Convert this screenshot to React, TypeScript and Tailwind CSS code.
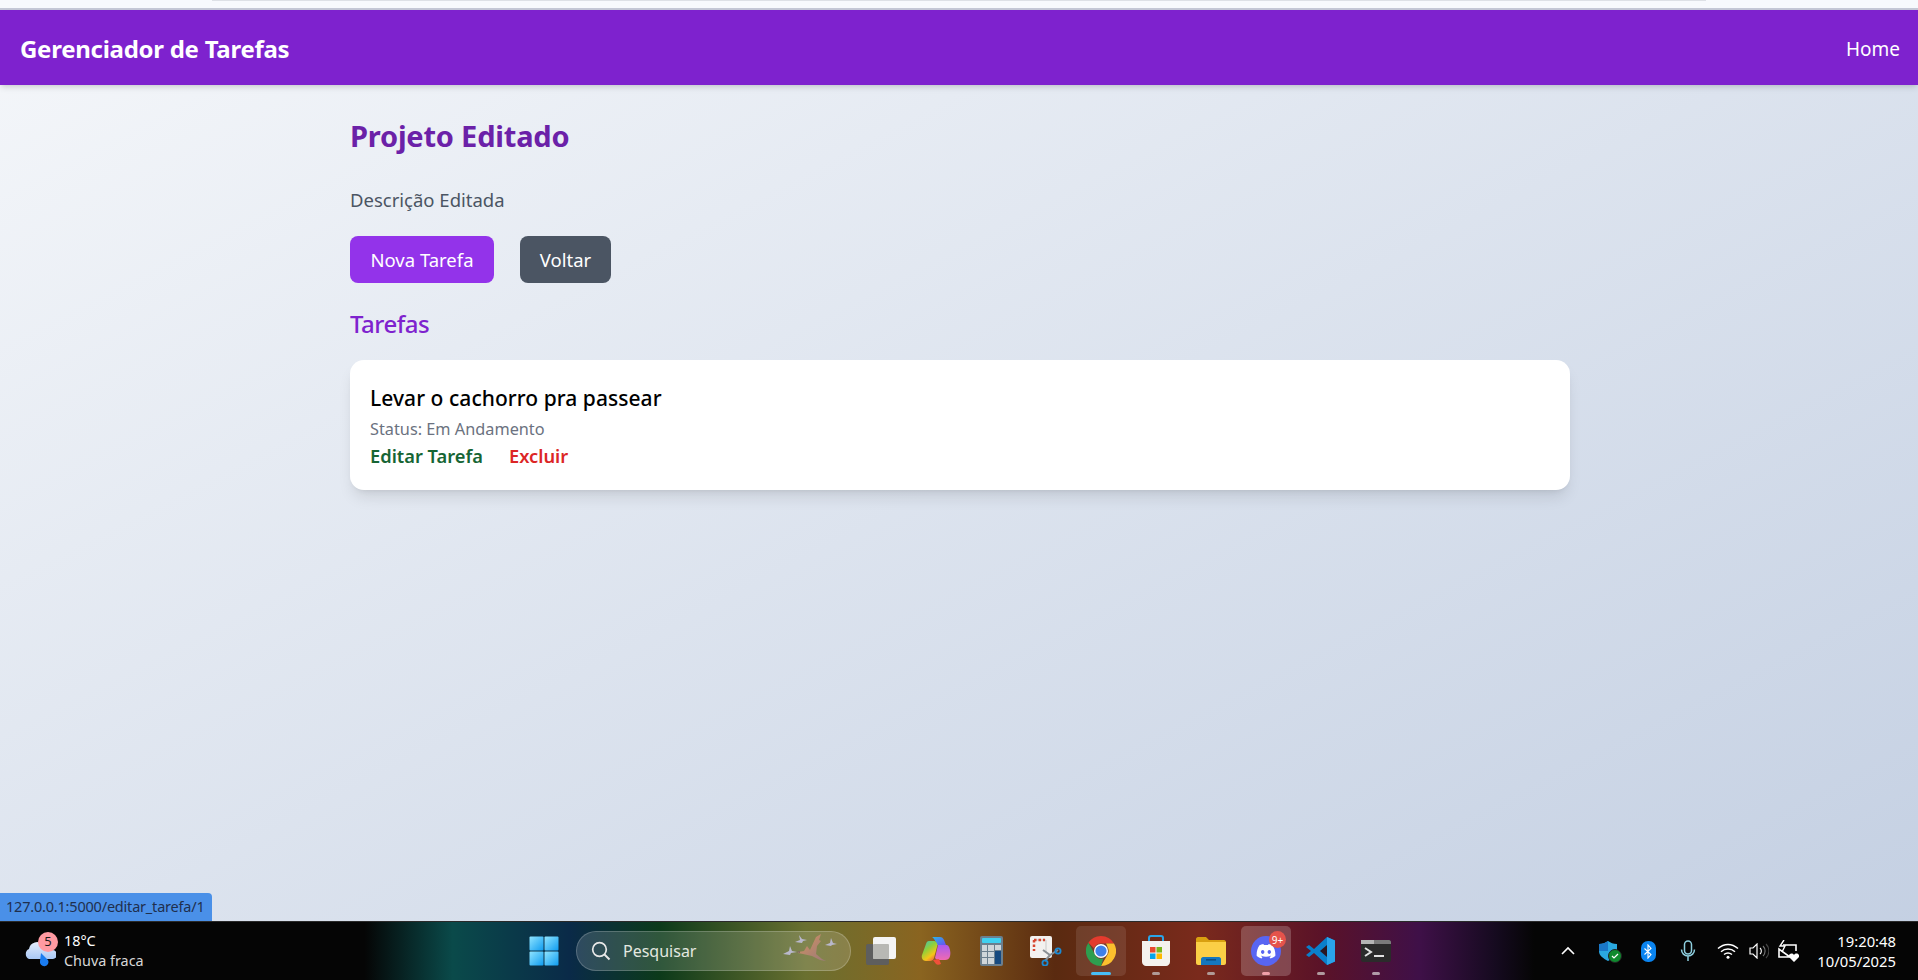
import { ReactNode } from "react";

function TaskButton({ children, active, dot }: { children: ReactNode; active?: string; dot?: string }) {
  return (
    <div className={`relative flex h-[50px] w-[50px] items-center justify-center rounded-[5px] ${active ?? ""}`}>
      {children}
      {dot && <span className={`absolute bottom-[1px] left-1/2 h-[3px] -translate-x-1/2 rounded-full ${dot}`} />}
    </div>
  );
}

function WindowsLogo() {
  return (
    <svg width="30" height="30" viewBox="0 0 30 30">
      <defs>
        <linearGradient id="win" x1="0" y1="0" x2="1" y2="1">
          <stop offset="0" stopColor="#8fe4ff" />
          <stop offset="1" stopColor="#0f9cf0" />
        </linearGradient>
      </defs>
      <rect x="0.5" y="0.5" width="14" height="14" rx="1" fill="url(#win)" />
      <rect x="15.5" y="0.5" width="14" height="14" rx="1" fill="url(#win)" />
      <rect x="0.5" y="15.5" width="14" height="14" rx="1" fill="url(#win)" />
      <rect x="15.5" y="15.5" width="14" height="14" rx="1" fill="url(#win)" />
    </svg>
  );
}

function Geese() {
  return (
    <svg width="56" height="36" viewBox="0 0 56 36">
      <defs>
        <linearGradient id="goose" x1="0" y1="0" x2="1" y2="1">
          <stop offset="0" stopColor="#d2925f" />
          <stop offset="1" stopColor="#9c7a7a" />
        </linearGradient>
      </defs>
      <path d="M16 19l6-1 3-5 3 4 6-13 5-3-2 6 2 1-4 5-1 8 6 5 4 2-6-1-8-4-9-2-5-1z" fill="url(#goose)" />
      <path d="M14 19l4-1v2z" fill="#7d6a60" />
      <path d="M13 9l5-2-1-5 3 4 5 1-4 1-1 2z M1 21l6-3 1-5 2 5 5 1-6 1-1 2z M43 12l5-2 1-5 2 5 4 1-5 1-1 1z" fill="#b9b8cc" />
    </svg>
  );
}

function CopiesIcon() {
  return (
    <svg width="32" height="30" viewBox="0 0 32 30">
      <rect x="1" y="8" width="23" height="21" rx="2" fill="#5e5e5e" />
      <rect x="8" y="1" width="23" height="22" rx="2" fill="#f4f4f4" />
      <rect x="8" y="8" width="16" height="15" rx="1" fill="#b8b8b4" />
    </svg>
  );
}

function CopilotIcon() {
  return (
    <svg width="30" height="30" viewBox="0 0 30 30">
      <defs>
        <linearGradient id="cpa" x1="0" y1="0" x2="1" y2="1">
          <stop offset="0" stopColor="#28b8e8" />
          <stop offset="1" stopColor="#6a4ff0" />
        </linearGradient>
        <linearGradient id="cpb" x1="0" y1="0" x2="0.6" y2="1">
          <stop offset="0" stopColor="#38c0c8" />
          <stop offset="0.45" stopColor="#8fd03a" />
          <stop offset="0.8" stopColor="#f5c518" />
          <stop offset="1" stopColor="#f07a3a" />
        </linearGradient>
        <linearGradient id="cpc" x1="0" y1="0" x2="0" y2="1">
          <stop offset="0" stopColor="#a85af0" />
          <stop offset="1" stopColor="#f06ab0" />
        </linearGradient>
      </defs>
      <path d="M11 1h8c2 0 3 1 4 3l2 5h-9c-1-3-3-7-5-8z" fill="url(#cpa)" />
      <path d="M8 5h5c2 0 3 2 3.500 4L13 22c-.5 2-2 3-4 3H5c-3 0-5-3-4-6L5 8c.5-2 1.500-3 3-3z" fill="url(#cpb)" />
      <path d="M17 9h8c2 0 3 1 4 5 1 5 0 10-5 10h-6c-2 0-3-1-4-2z" fill="url(#cpc)" />
      <path d="M12 24l6-1 2 5c-2 1-4 1-5 0z" fill="#f0503a" />
    </svg>
  );
}

function Calculator() {
  const keys = [0, 1, 2, 3, 4, 5];
  return (
    <div className="flex h-[30px] w-[23px] flex-col gap-[2px] rounded-[2px] bg-[#6b7f8e] p-[2px]">
      <div className="h-[5px] rounded-[1px] bg-[#3fd0f0]" />
      <div className="flex flex-1 gap-[1px]">
        <div className="grid flex-1 grid-cols-2 gap-[1px]">
          {keys.map((k) => (
            <div key={k} className="bg-[#cfd6da]" />
          ))}
        </div>
        <div className="flex w-[6px] flex-col gap-[1px]">
          <div className="h-[5px] bg-[#cfd6da]" />
          <div className="flex-1 bg-[#164a80]" />
        </div>
      </div>
    </div>
  );
}

function SnipIcon() {
  return (
    <svg width="32" height="30" viewBox="0 0 32 30">
      <rect x="0" y="0" width="22" height="22" rx="2" fill="#f3f1ef" />
      <path d="M4 4h12v12" fill="none" stroke="#c9c9c9" strokeWidth="1" />
      <path d="M4 4h11M4 4v11" fill="none" stroke="#d8452e" strokeWidth="2.5" strokeDasharray="2.5 2" />
      <path d="M13 14l7 5 8-5M20 19l-5 6" fill="none" stroke="#8a8f93" strokeWidth="2" />
      <circle cx="28" cy="15" r="2.6" fill="none" stroke="#1a8ad4" strokeWidth="1.8" />
      <circle cx="15" cy="27" r="2.6" fill="none" stroke="#1a8ad4" strokeWidth="1.8" />
    </svg>
  );
}

function ChromeIcon() {
  return (
    <svg width="30" height="30" viewBox="0 0 30 30">
      <path d="M15 0a15 15 0 0 1 13 7.5H15a7.500 7.500 0 0 0-7 4.800L2.400 6.800A15 15 0 0 1 15 0z" fill="#e33b2e" />
      <path d="M28 7.500A15 15 0 0 1 15 30l6.500-11.200A7.500 7.500 0 0 0 21.500 11 7.500 7.500 0 0 0 20 7.500z" fill="#fbc02d" />
      <path d="M2.400 6.800l6.500 11.600a7.500 7.500 0 0 0 8.400 4.200L15 30A15 15 0 0 1 2.400 6.800z" fill="#2e9e4f" />
      <circle cx="15" cy="15" r="7" fill="#fff" />
      <circle cx="15" cy="15" r="5.600" fill="#3f80ea" />
    </svg>
  );
}

function StoreIcon() {
  return (
    <svg width="30" height="32" viewBox="0 0 30 32">
      <path d="M8 7V3c0-1 .5-2 2-2h10c1.500 0 2 1 2 2v4" fill="none" stroke="#2aa5e8" strokeWidth="2" />
      <path d="M1 6h28v21c0 2-2 4-4 4H5c-2 0-4-2-4-4z" fill="#f4f2ee" />
      <rect x="9" y="12" width="5.500" height="5.500" fill="#e8492e" />
      <rect x="15.500" y="12" width="5.500" height="5.500" fill="#7ab51d" />
      <rect x="9" y="18.500" width="5.500" height="5.500" fill="#05a5ea" />
      <rect x="15.500" y="18.500" width="5.500" height="5.500" fill="#fdb900" />
    </svg>
  );
}

function FolderIcon() {
  return (
    <svg width="30" height="28" viewBox="0 0 30 28">
      <path d="M0 2c0-1 1-2 2-2h8l3 3h15c1 0 2 1 2 2v3H0z" fill="#d9a010" />
      <path d="M0 5h30v21c0 1-1 2-2 2H2c-1 0-2-1-2-2z" fill="#fbcf46" />
      <path d="M5 28v-6c0-1 1-2 2-2h16c1 0 2 1 2 2v6z" fill="#1477bf" />
      <rect x="10" y="22" width="10" height="1.600" fill="#0c4f85" />
    </svg>
  );
}

function DiscordIcon() {
  return (
    <div className="relative flex h-[30px] w-[30px] items-center justify-center rounded-full bg-[#5865f2]">
      <svg width="20" height="15" viewBox="0 0 20 15">
        <path
          d="M16.500 1.300A16 16 0 0 0 12.600.1l-.5 1a15 15 0 0 0-4.200 0L7.400.1a16 16 0 0 0-3.900 1.200C1 5 .4 8.600.7 12.100A16 16 0 0 0 5.500 14.500l1-1.600-1.600-.8.4-.3a11.500 11.500 0 0 0 9.400 0l.4.300-1.600.8 1 1.600a16 16 0 0 0 4.800-2.400c.4-4-.7-7.600-2.800-10.800zM6.700 9.900c-.9 0-1.700-.9-1.700-1.900S5.800 6.100 6.700 6.100s1.700.9 1.700 1.900-.8 1.900-1.700 1.900zm6.600 0c-.9 0-1.700-.9-1.700-1.900s.8-1.900 1.700-1.900 1.700.9 1.700 1.900-.8 1.900-1.700 1.900z"
          fill="#fff"
        />
      </svg>
      <span className="absolute -right-[5px] -top-[5px] flex h-[17px] w-[17px] items-center justify-center rounded-full bg-[#e5534b] text-[10px] leading-none text-white">
        9+
      </span>
    </div>
  );
}

function VsCodeIcon() {
  return (
    <svg width="30" height="30" viewBox="0 0 30 30">
      <path d="M21 1l8 3.500v21L21 29 8 17l-5 4-3-2 5-4-5-4 3-2 5 4z" fill="#0a7fcb" />
      <path d="M21 1l8 3.500v21L21 29z" fill="#2aa3ea" />
      <path d="M21 9l-7 6 7 6z" fill="#2a1620" />
    </svg>
  );
}

function TerminalIcon() {
  return (
    <svg width="30" height="22" viewBox="0 0 30 22">
      <rect width="30" height="22" rx="2" fill="#2b2b2b" />
      <path d="M0 2c0-1 1-2 2-2h26c1 0 2 1 2 2v2H0z" fill="#7b7b7b" />
      <rect x="0" y="0" width="13" height="4" fill="#b5b5b5" />
      <path d="M4 8l6 4-6 4" fill="none" stroke="#e2e2e2" strokeWidth="2" />
      <rect x="13" y="15" width="10" height="2" fill="#e2e2e2" />
    </svg>
  );
}

function WeatherIcon() {
  return (
    <div className="relative h-[34px] w-[34px]">
      <svg width="32" height="30" viewBox="0 0 32 30" className="absolute left-0 top-[5px]">
        <defs>
          <linearGradient id="cloud" x1="0" y1="0" x2="0" y2="1">
            <stop offset="0" stopColor="#e3ecfb" />
            <stop offset="1" stopColor="#a9c8f5" />
          </linearGradient>
        </defs>
        <path d="M5 20a5.500 5.500 0 0 1 0-10 8 8 0 0 1 14-4 6 6 0 0 1 10 5 4.500 4.500 0 0 1-1 9z" fill="url(#cloud)" />
        <path d="M17 14l7 7a4.300 4.300 0 1 1-8 1z" fill="#1a7cf0" />
      </svg>
      <span className="absolute -top-[2px] left-[14px] flex h-[20px] w-[20px] items-center justify-center rounded-full bg-[#ff9aa2] text-[13px] text-[#1a1a1a]">
        5
      </span>
    </div>
  );
}

function Tray() {
  return (
    <div className="flex items-center text-white">
      <div className="flex w-[40px] justify-center">
        <svg width="16" height="10" viewBox="0 0 16 10">
          <path d="M2 8l6-6 6 6" fill="none" stroke="#fff" strokeWidth="1.600" />
        </svg>
      </div>
      <div className="relative flex w-[40px] justify-center">
        <svg width="18" height="20" viewBox="0 0 18 20">
          <path d="M9 0c3 2 5 3 9 3v7c0 5-4 7-9 10-5-3-9-5-9-10V3c4 0 6-1 9-3z" fill="#2aa8e0" />
          <path d="M9 0c-3 2-5 3-9 3v7h9z" fill="#1a78c8" />
        </svg>
        <span className="absolute left-[20px] top-[8px] flex h-[14px] w-[14px] items-center justify-center rounded-full border border-[#222] bg-[#0f8a2e]">
          <svg width="8" height="8" viewBox="0 0 8 8">
            <path d="M1 4l2 2 4-4" fill="none" stroke="#fff" strokeWidth="1.200" />
          </svg>
        </span>
      </div>
      <div className="flex w-[40px] justify-center">
        <div className="flex h-[21px] w-[15px] items-center justify-center rounded-[7px] bg-[#0a84f0]">
          <svg width="10" height="15" viewBox="0 0 10 15">
            <path d="M1.500 4.500l6.500 6L5 14V1l3 3.500-6.500 6" fill="none" stroke="#fff" strokeWidth="1.100" />
          </svg>
        </div>
      </div>
      <div className="flex w-[40px] justify-center">
        <svg width="16" height="22" viewBox="0 0 16 22">
          <rect x="4.500" y="1" width="7" height="13" rx="3.500" fill="none" stroke="#8fd0e0" strokeWidth="1.500" />
          <path d="M1.500 9.500a6.500 6.500 0 0 0 13 0M8 16v5" fill="none" stroke="#8fd0e0" strokeWidth="1.500" />
        </svg>
      </div>
      <div className="flex w-[40px] justify-center">
        <svg width="22" height="16" viewBox="0 0 22 16">
          <path d="M1 5.500c6-5.500 14-5.500 20 0M4 8.700c4-3.500 10-3.500 14 0M7 11.500c2.500-2 5.500-2 8 0" fill="none" stroke="#fff" strokeWidth="1.500" />
          <circle cx="11" cy="14.300" r="1.500" fill="#fff" />
        </svg>
      </div>
      <div className="flex w-[22px] justify-center">
        <svg width="20" height="16" viewBox="0 0 20 16">
          <path d="M1 5h3l4-4v14l-4-4H1z" fill="none" stroke="#fff" strokeWidth="1.200" />
          <path d="M11 5a4 4 0 0 1 0 6" fill="none" stroke="#fff" strokeWidth="1.100" />
          <path d="M14 3a7 7 0 0 1 0 10" fill="none" stroke="#777" strokeWidth="1.100" />
          <path d="M17 1a10 10 0 0 1 0 14" fill="none" stroke="#444" strokeWidth="1.100" />
        </svg>
      </div>
      <div className="ml-[3px] flex w-[30px] justify-center">
        <svg width="22" height="22" viewBox="0 0 22 22">
          <path d="M6 5h13v6M13 17H2V9z" fill="none" stroke="#fff" strokeWidth="1.600" />
          <path d="M7 0L3 6h5l-3 6" fill="none" stroke="#fff" strokeWidth="1.400" />
          <path d="M17 22l-5-5c-1-3 3-5 5-2 2-3 6-1 5 2z" fill="#fff" />
        </svg>
      </div>
      <div className="ml-[14px] text-right text-[14.800px] leading-[20px] text-white">
        <div>19:20:48</div>
        <div>10/05/2025</div>
      </div>
    </div>
  );
}

export default function App() {
  return (
    <div className="relative flex h-screen w-full flex-col overflow-hidden bg-gradient-to-br from-[#f5f7fa] to-[#c3cfe2] font-['Noto_Sans','Open_Sans',sans-serif]">
      {/* franja del navegador arriba */}
      <div className="h-[10px] border-b-2 border-[#c4c7d6] bg-[#f7f9fd]">
        <div className="mx-[212px] h-[1px] bg-[#dde0e6]" />
      </div>

      <nav className="z-10 flex h-[75px] items-center justify-between bg-[#7e22ce] pl-[20px] pr-[18px] pt-[2px] shadow-md">
        <span className="text-[24px] font-bold tracking-[-0.27px] text-white">Gerenciador de Tarefas</span>
        <a className="mt-[1px] text-[19px] text-white">Home</a>
      </nav>

      <main className="ml-[350px] flex w-[1220px] flex-1 flex-col pt-[32px]">
        <h1 className="text-[29px] font-bold leading-[38px] tracking-[-0.2px] text-[#6b21a8]">Projeto Editado</h1>
        <p className="mt-[32px] text-[18.500px] leading-[26px] text-[#4b5563]">Descrição Editada</p>
        <div className="mt-[23px] flex gap-[26px]">
          <button className="h-[47px] w-[144px] rounded-[8px] bg-[#9333ea] text-[18.500px] text-white">Nova Tarefa</button>
          <button className="h-[47px] w-[91px] rounded-[8px] bg-[#4b5563] text-[18.500px] text-white">Voltar</button>
        </div>
        <h2 className="mt-[25px] text-[24px] font-medium leading-[32px] tracking-[-0.5px] text-[#7e22ce]">Tarefas</h2>
        <div className="mt-[20px] h-[130px] rounded-[14px] bg-white px-[20px] pt-[22px] shadow-lg">
          <h3 className="text-[21px] font-medium leading-[32px] tracking-[0.05px] text-black">Levar o cachorro pra passear</h3>
          <p className="text-[16.300px] leading-[30px] text-[#6b7280]">Status: Em Andamento</p>
          <div className="flex gap-[26px] text-[18.300px] font-semibold leading-[24px]">
            <a className="text-[#166534]">Editar Tarefa</a>
            <a className="text-[#dc2626]">Excluir</a>
          </div>
        </div>
      </main>

      <div className="absolute bottom-[59px] left-0 h-[28px] w-[212px] rounded-tr-[4px] bg-[#4a90e8] pl-[6px] text-[14.500px] leading-[27px] tracking-[-0.2px] text-[#1f2f4d]">
        127.0.0.1:5000/editar_tarefa/1
      </div>

      <footer className="grid h-[59px] grid-cols-[1fr_auto_1fr] items-center border-t border-[#2a2a2a] bg-[linear-gradient(90deg,#050505_0%,#050505_19%,#0a4a4a_23.600%,#0a2a48_29.700%,#0c3a1a_34.400%,#6a7030_42%,#8a6420_48%,#5a2a10_55%,#7a2a1c_62.500%,#5a1228_69%,#3f1048_74%,#150a1f_78%,#050505_80%,#050505_100%)] pl-[24px] pr-[22px]">
        <div className="flex items-center gap-[6px]">
          <WeatherIcon />
          <div className="text-[14.400px] leading-[20px]">
            <div className="text-white">18°C</div>
            <div className="text-[#d8d8d8]">Chuva fraca</div>
          </div>
        </div>

        <div className="flex items-center gap-[5px]">
          <TaskButton>
            <WindowsLogo />
          </TaskButton>
          <div className="ml-[2px] flex h-[40px] w-[275px] items-center justify-between rounded-full border border-white/20 bg-white/15 pl-[14px] pr-[12px]">
            <div className="flex items-center gap-[12px]">
              <svg width="20" height="20" viewBox="0 0 20 20">
                <circle cx="8.500" cy="8.500" r="6.800" fill="none" stroke="#e8e8e8" strokeWidth="1.700" />
                <path d="M13.500 13.500l5 5" stroke="#e8e8e8" strokeWidth="2" />
              </svg>
              <span className="text-[16px] text-[#e4e8e0]">Pesquisar</span>
            </div>
            <Geese />
          </div>
          <TaskButton>
            <CopiesIcon />
          </TaskButton>
          <TaskButton>
            <CopilotIcon />
          </TaskButton>
          <TaskButton>
            <Calculator />
          </TaskButton>
          <TaskButton>
            <SnipIcon />
          </TaskButton>
          <TaskButton active="bg-white/10" dot="w-[20px] bg-[#47bdf5]">
            <ChromeIcon />
          </TaskButton>
          <TaskButton dot="w-[8px] bg-[#b09a96]">
            <StoreIcon />
          </TaskButton>
          <TaskButton dot="w-[8px] bg-[#b09a96]">
            <FolderIcon />
          </TaskButton>
          <TaskButton active="bg-white/20" dot="w-[8px] bg-[#f0a0a8]">
            <DiscordIcon />
          </TaskButton>
          <TaskButton dot="w-[8px] bg-[#b09a9e]">
            <VsCodeIcon />
          </TaskButton>
          <TaskButton dot="w-[8px] bg-[#b09aa8]">
            <TerminalIcon />
          </TaskButton>
        </div>

        <div className="flex justify-end">
          <Tray />
        </div>
      </footer>
    </div>
  );
}
